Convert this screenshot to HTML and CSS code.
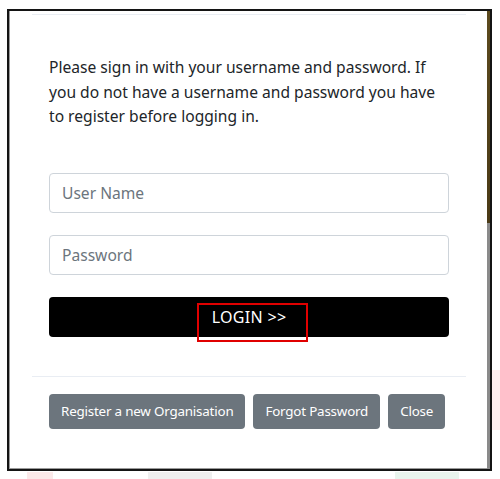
FILE: index.html
```html
<!DOCTYPE html>
<html lang="en">
<head>
<meta charset="utf-8">
<title>Login</title>
<link rel="stylesheet" href="styles.css">
</head>
<body>
<div class="frame">
  <div class="modal">
    <div class="rule"></div>
    <div class="modal-body">
      <p class="intro">Please sign in with your username and password. If you do not have a username and password you have to register before logging in.</p>
      <form class="login-form">
        <input class="form-control" type="text" placeholder="User Name">
        <input class="form-control" type="password" placeholder="Password">
        <button type="button" class="btn-login">LOGIN &gt;&gt;<span class="highlight"></span></button>
      </form>
    </div>
    <div class="rule rule-footer"></div>
    <div class="modal-footer">
      <button type="button" class="btn-secondary">Register a new Organisation</button>
      <button type="button" class="btn-secondary">Forgot Password</button>
      <button type="button" class="btn-secondary">Close</button>
    </div>
  </div>
  <div class="scroll-stripe"></div>
</div>
</body>
</html>
```
FILE: styles.css
```css
* { box-sizing: border-box; }

html, body {
  margin: 0;
  padding: 0;
  width: 500px;
  height: 479px;
  overflow: hidden;
}

body {
  font-family: "Noto Sans", "Open Sans", sans-serif;
  color: #212529;
  background-color: #ffffff;
  background-image:
    linear-gradient(#fbe9e9, #fbe9e9),
    linear-gradient(#efefef, #efefef),
    linear-gradient(#e9f4ed, #e9f4ed),
    linear-gradient(#fdeeee, #fdeeee);
  background-size: 26px 8px, 64px 8px, 64px 8px, 8px 60px;
  background-position: 27px 472px, 148px 472px, 395px 472px, 492px 370px;
  background-repeat: no-repeat;
  padding: 9px 0 0 7px;
}

.frame {
  width: 485px;
  height: 462px;
  border: 2px solid #141414;
  display: flex;
  background: #ffffff;
  box-shadow: inset 1px 0 0 #9a9a9a, inset 0 -1px 0 #9a9a9a;
}

.modal {
  flex: 1;
  min-width: 0;
  padding: 3px 21px 0 23px;
  display: flex;
  flex-direction: column;
}

.rule {
  height: 1px;
  background: #e9edf3;
}

.modal-body {
  padding: 0 17px;
}

.intro {
  margin: 40px 0 0;
  font-size: 15.6px;
  line-height: 24.5px;
  color: #212529;
}

.login-form {
  margin-top: 44px;
  display: flex;
  flex-direction: column;
}

.form-control {
  display: block;
  width: 100%;
  height: 40px;
  padding: 0 12px;
  font-family: inherit;
  font-size: 15.6px;
  color: #495057;
  border: 1px solid #ced4da;
  border-radius: 4px;
  margin-bottom: 22px;
  background: #fff;
}

.form-control::placeholder {
  color: #6c757d;
  opacity: 1;
}

.btn-login {
  position: relative;
  height: 40px;
  width: 100%;
  background: #000000;
  color: #ffffff;
  border: 0;
  border-radius: 4px;
  font-family: inherit;
  font-size: 16px;
  letter-spacing: 0.3px;
  padding: 0;
  cursor: pointer;
}

.highlight {
  position: absolute;
  left: 148px;
  top: 6px;
  width: 111px;
  height: 39px;
  border: 2px solid #e00000;
}

.rule-footer {
  margin-top: 39px;
}

.modal-footer {
  display: flex;
  gap: 8px;
  padding: 17px 17px 0;
}

.btn-secondary {
  flex-shrink: 0;
  white-space: nowrap;
  height: 35px;
  padding: 0 12px;
  background: #6c757d;
  color: #ffffff;
  border: 0;
  border-radius: 4px;
  font-family: inherit;
  font-size: 13.4px;
  letter-spacing: -0.2px;
  cursor: pointer;
}

.scroll-stripe {
  width: 3px;
  background: linear-gradient(#5c4a1e 0, #4a3a16 212px, #8a8a8a 212px, #8a8a8a 100%);
}
```
